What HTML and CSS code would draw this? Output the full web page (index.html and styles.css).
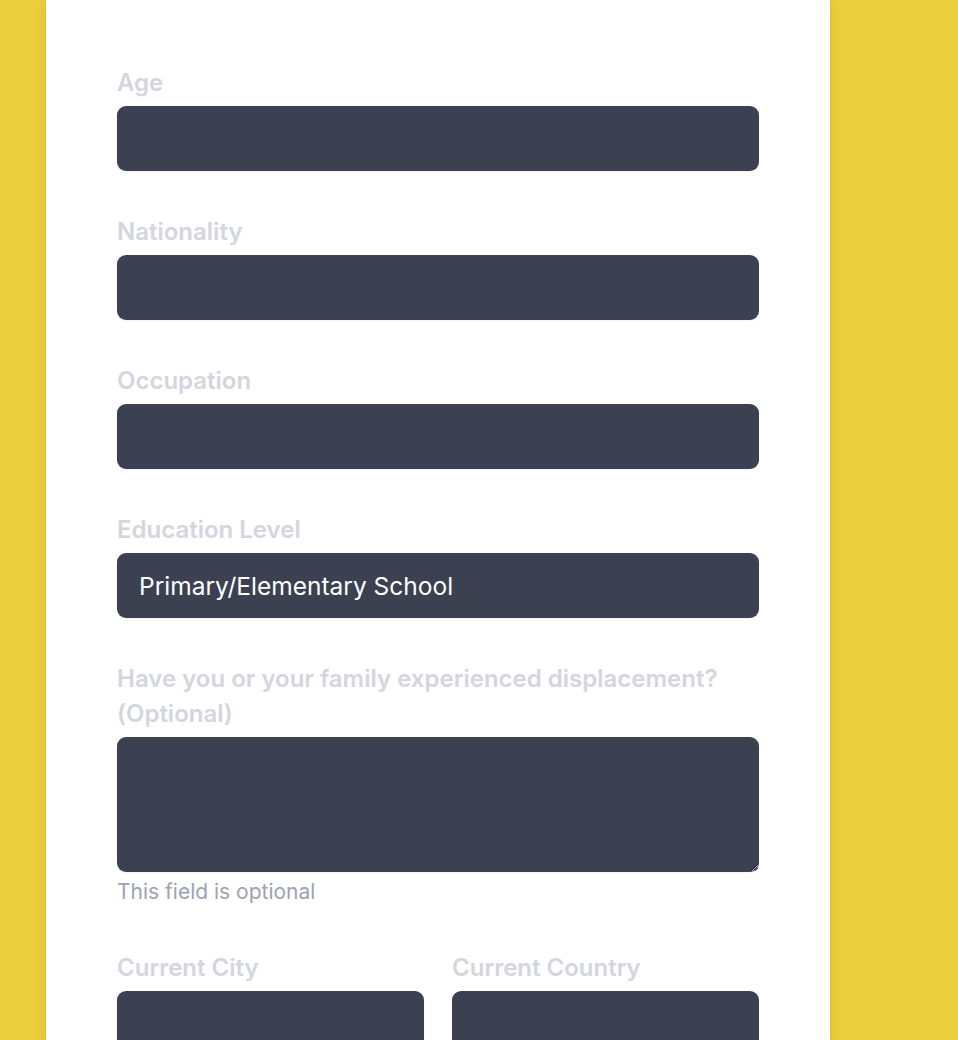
FILE: index.html
```html
<!DOCTYPE html>
<html lang="en">
<head>
<meta charset="utf-8">
<title>Form</title>
<link rel="stylesheet" href="styles.css">
</head>
<body>
<main class="page">
  <form class="card">
    <div class="field">
      <label class="label" for="age">Age</label>
      <input class="input" id="age" type="text">
    </div>
    <div class="field">
      <label class="label" for="nat">Nationality</label>
      <input class="input" id="nat" type="text">
    </div>
    <div class="field">
      <label class="label" for="occ">Occupation</label>
      <input class="input" id="occ" type="text">
    </div>
    <div class="field">
      <label class="label" for="edu">Education Level</label>
      <input class="input" id="edu" type="text" value="Primary/Elementary School">
    </div>
    <div class="field">
      <label class="label" for="disp">Have you or your family experienced displacement? (Optional)</label>
      <textarea class="input textarea" id="disp"></textarea>
      <p class="hint">This field is optional</p>
    </div>
    <div class="row">
      <div class="field">
        <label class="label" for="city">Current City</label>
        <input class="input" id="city" type="text">
      </div>
      <div class="field">
        <label class="label" for="country">Current Country</label>
        <input class="input" id="country" type="text">
      </div>
    </div>
  </form>
</main>
</body>
</html>
```

FILE: styles.css
```css
html, body {
  margin: 0;
  height: 1040px;
  overflow: hidden;
}
body {
  background: #eccf3d;
  font-family: Inter, "Noto Sans", "Liberation Sans", sans-serif;
}
.page {
  padding-left: 46px;
}
.card {
  box-sizing: border-box;
  width: 784px;
  height: 1040px;
  overflow: hidden;
  background: #ffffff;
  padding: 65px 71px 0;
  box-shadow: 0 0 0 1px rgba(0,0,0,0.04), 0 4px 16px rgba(0,0,0,0.08);
  display: flex;
  flex-direction: column;
  gap: 43px;
}
.field {
  display: flex;
  flex-direction: column;
  flex-shrink: 0;
}
.label {
  display: block;
  font-size: 24px;
  line-height: 35px;
  font-weight: 600;
  color: #d3d6de;
  margin-bottom: 6px;
}
.input {
  box-sizing: border-box;
  width: 100%;
  height: 65px;
  border: none;
  border-radius: 9px;
  background: #3b4151;
  color: #ffffff;
  font-family: inherit;
  font-size: 24.5px;
  padding: 0 22px;
  box-shadow: 0 1px 2px rgba(0,0,0,0.06);
  outline: none;
}
.textarea {
  height: 135px;
  resize: vertical;
  padding: 16px 22px;
}
.hint {
  margin: 5px 0 0;
  font-size: 21px;
  line-height: 30px;
  color: #9ca3af;
}
.row {
  display: grid;
  grid-template-columns: 1fr 1fr;
  gap: 28px;
  flex-shrink: 0;
}
```
